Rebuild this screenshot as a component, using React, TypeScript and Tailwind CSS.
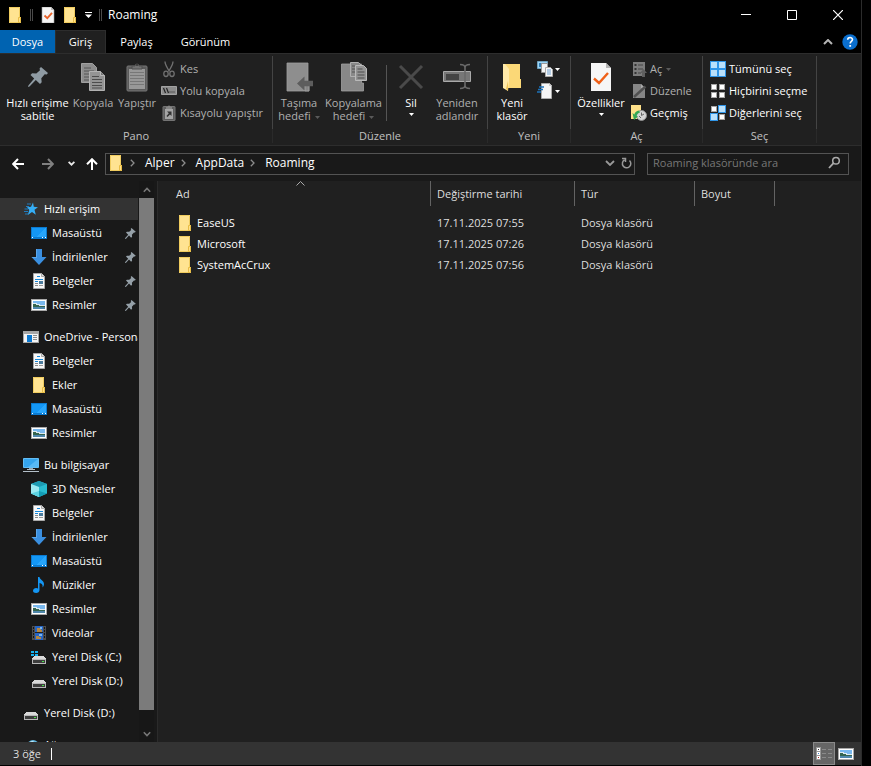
import React from "react";

type IconProps = { className?: string };
type IconType = React.FC<IconProps>;

const FolderIcon: IconType = () => (
  <svg width="16" height="16" viewBox="0 0 16 16" className="shrink-0">
    <path d="M2 0h11v10h1v6H2z" fill="#ffe391" />
    <path d="M2.500 .5h10v10h1v5h-11z" fill="none" stroke="#f0cc5f" />
    <path d="M11.500 10.500h2v5h-2z" fill="#ffe18a" stroke="#e8bc45" />
  </svg>
);

const CheckPageIcon: IconType = () => (
  <svg width="16" height="16" viewBox="0 0 16 16">
    <path d="M2 0h9l3 3v13H2z" fill="#f5f5f5" stroke="#9b9b9b" strokeWidth=".6" />
    <path d="M11 0v3h3z" fill="#bdbdbd" />
    <path d="M4.500 8.500l2.800 2.700 4.700-5.400" fill="none" stroke="#e8622a" strokeWidth="1.800" />
  </svg>
);

const PinIcon: IconType = () => (
  <svg width="22" height="22" viewBox="0 0 22 22">
    <path d="M14 1l7 6-1.300 1.600-2-.3-3.400 3.900.4 4-1.700 1.700-4.200-3.900L2.500 20.500 1 21l.4-1.600 5.800-6.800L3.500 9l1.600-1.700 4.200.2 3.700-3.200-.5-1.800z" fill="#8f9ba3" />
  </svg>
);

const SmallPinIcon: IconType = () => (
  <svg width="11" height="11" viewBox="0 0 11 11" className="shrink-0">
    <path d="M6.500 0l4.300 3.800-.9.800-1-.1-2 2.200.2 2.100-1 .9L4 7.600.8 11 0 10.800.2 10 3.200 6.800 1 4.600l.9-.9 2.300.1 2-1.700-.5-1.200z" fill="#95a0a8" />
  </svg>
);

const CopyIcon: IconType = () => (
  <svg width="26" height="30" viewBox="0 0 26 30">
    <path d="M1.500 1.500h11l4 4v15h-15z" fill="#8d8d8d" stroke="#a0a0a0" />
    <path d="M4 6h7M4 9h10M4 12h5M4 15h5M4 18h5" stroke="#555" />
    <path d="M9.500 9.500h11l4 4v15h-15z" fill="#949494" stroke="#b2b2b2" />
    <path d="M20.500 9.500v4h4" fill="#777" stroke="#b8b8b8" />
    <path d="M12 14.500h7M12 17.500h10M12 20.500h10M12 23.500h10M12 26h10" stroke="#4c4c4c" />
  </svg>
);

const PasteIcon: IconType = () => (
  <svg width="22" height="30" viewBox="0 0 22 30">
    <rect x="1" y="4" width="20" height="25" rx="1" fill="#5b5b5b" stroke="#777" />
    <path d="M3 7h16v20H3z" fill="#989898" />
    <path d="M4 10.500h14M4 13.500h14M4 16.500h14M4 19.500h14M4 22.500h14" stroke="#777" />
    <path d="M6 7V4h3a2 2 0 014 0h3v3z" fill="#727272" stroke="#505050" />
    <circle cx="11" cy="3" r="1" fill="#333" />
  </svg>
);

const ScissorsIcon: IconType = () => (
  <svg width="16" height="18" viewBox="0 0 16 18" fill="none" stroke="#717171" strokeWidth="1.300">
    <path d="M4 1.500c0 3 1.200 5 4.500 10M12 1.500c0 3-1.200 5-4.500 10" />
    <ellipse cx="5" cy="13.800" rx="2.200" ry="2.700" />
    <ellipse cx="11" cy="13.800" rx="2.200" ry="2.700" />
  </svg>
);

const PathIcon: IconType = () => (
  <svg width="16" height="16" viewBox="0 0 16 16">
    <path d="M.5 3.500h15v8H.5z" fill="#8c8c8c" stroke="#a2a2a2" />
    <path d="M2.500 5l2 5M5.500 5l2 5" stroke="#222" strokeWidth="1.200" />
    <path d="M8.500 9h1M10.500 9h1M12.500 9h1" stroke="#222" />
  </svg>
);

const PasteShortcutIcon: IconType = () => (
  <svg width="16" height="16" viewBox="0 0 16 16">
    <rect x="2" y="1.500" width="12" height="14" rx=".5" fill="#5e5e5e" stroke="#747474" />
    <path d="M4 4h8v10H4z" fill="#a5a5a5" />
    <path d="M5 4V2h1.500a1.500 1.500 0 013 0H11v2z" fill="#858585" />
    <path d="M6 6.500h4.500V11L9 9.500 6.500 12 5.500 11l2.300-2.800z" fill="#333" />
  </svg>
);

const MoveToIcon: IconType = () => (
  <svg width="28" height="30" viewBox="0 0 28 30">
    <path d="M2 1h21v20h1v8H2z" fill="#8e8e8e" stroke="#a0a0a0" strokeWidth=".8" />
    <path d="M20 20h4v9h-4z" fill="#858585" stroke="#b0b0b0" strokeWidth=".6" />
    <path d="M12 21.500l7.500-7v4.200H28v5.600h-8.500v4.200z" fill="#5d5d5d" />
  </svg>
);

const CopyToIcon: IconType = () => (
  <svg width="28" height="32" viewBox="0 0 28 32">
    <path d="M1.500 3h20v19h2v8h-22z" fill="#888" stroke="#a0a0a0" strokeWidth=".8" />
    <path d="M10.500 1.500h8l3 3v11h-11z" fill="#898989" stroke="#b0b0b0" />
    <path d="M12 5h5M12 8h3M12 11h3" stroke="#555" />
    <path d="M15.500 4.500h8l3 3v12h-11z" fill="#949494" stroke="#bababa" />
    <path d="M17.500 8h5M17.500 11h7M17.500 14h7M17.500 17h7" stroke="#4c4c4c" />
  </svg>
);

const DeleteIcon: IconType = () => (
  <svg width="26" height="28" viewBox="0 0 26 28">
    <path d="M2 3l22 22M24 3L2 25" stroke="#4a4a4a" strokeWidth="3" />
  </svg>
);

const RenameIcon: IconType = () => (
  <svg width="30" height="28" viewBox="0 0 30 28" fill="none">
    <path d="M1.500 8.500h27v10h-27z" fill="#777" stroke="#aaa" />
    <path d="M4 11h13v6H4z" fill="#444" />
    <path d="M18 1.500c3 0 5 .5 5 3v18c0 2.500-2 3-5 3M28 1.500c-3 0-5 .5-5 3v18c0 2.500 2 3 5 3" stroke="#6a6a6a" strokeWidth="1.600" />
  </svg>
);

const NewFolderIcon: IconType = () => (
  <svg width="20" height="30" viewBox="0 0 20 30">
    <path d="M1 2h17v15h1v9H1z" fill="#fbd877" />
    <path d="M1 2h2l4 5v12l-1 10-5-3z" fill="#ffe9a8" />
    <path d="M6 19v10l-2-2z" fill="#eec255" />
  </svg>
);

const NewItemIcon: IconType = () => (
  <svg width="16" height="16" viewBox="0 0 16 16">
    <path d="M.5 .5h10v7H.5z" fill="#9ed3f5" stroke="#6fa3bf" />
    <path d="M2 2h4v4H2z" fill="#2f7fb8" />
    <path d="M4.500 2.500h6v9h-6z" fill="#f4f4f4" stroke="#999" />
    <path d="M8.500 6.500h5l2 2v7h-7z" fill="#f7f7f7" stroke="#aaa" />
    <path d="M10 9h4M10 11h4M10 13h4" stroke="#6c9fd0" />
  </svg>
);

const EasyAccessIcon: IconType = () => (
  <svg width="16" height="16" viewBox="0 0 16 16">
    <path d="M4.500 .5h8l2 2v13h-10z" fill="#f5f5f5" stroke="#aaa" />
    <path d="M12 0v3h3" fill="#ccc" />
    <path d="M2 4h5M1 6.500h5M0 9h4" stroke="#1c72b8" strokeWidth="1.400" />
  </svg>
);

const PropertiesIcon: IconType = () => (
  <svg width="22" height="30" viewBox="0 0 22 30">
    <path d="M1 1h15l5 5v23H1z" fill="#f6f6f6" />
    <path d="M16 1v5h5z" fill="#b5b5b5" />
    <path d="M4 16.500l5 4.500 9-10" fill="none" stroke="#ef6018" strokeWidth="2.400" />
  </svg>
);

const OpenIcon: IconType = () => (
  <svg width="16" height="16" viewBox="0 0 16 16">
    <path d="M2 1h12v14H2z" fill="#7c7c7c" />
    <path d="M3.500 3h2v2h-2zM3.500 7h2v2h-2zM3.500 11h2v2h-2z" fill="#333" />
    <path d="M7 4h5M7 8h5M7 12h3" stroke="#444" />
    <path d="M12.500 8l3.500 4h-2v4h-3v-4H9z" fill="#606060" />
  </svg>
);

const EditIcon: IconType = () => (
  <svg width="16" height="16" viewBox="0 0 16 16">
    <path d="M2 1h8l4 4v10H2z" fill="#868686" />
    <path d="M10 1v4h4" fill="#aaa" />
    <path d="M3 14L14.500 3.500" stroke="#505050" strokeWidth="2.400" />
  </svg>
);

const HistoryIcon: IconType = () => (
  <svg width="16" height="16" viewBox="0 0 16 16">
    <path d="M0 0h10v9h1v5H0z" fill="#ffe18a" />
    <circle cx="10.500" cy="10.500" r="5" fill="#d5d5d5" stroke="#909090" />
    <path d="M10.500 7.500v3l2.500-1.500M8 11l2 2" stroke="#666" fill="none" />
    <path d="M1.500 8l1.500 7 4-3.500-1.500-.5c.5-2 1.800-3 3.500-3.500l-1-2C5 6 4 7.500 3.300 9.500z" fill="#35a853" />
  </svg>
);

// the four tiles of the "select" icons, blue when the tile is selected
const Tiles: React.FC<{ on: boolean[] }> = ({ on }) => (
  <svg width="16" height="16" viewBox="0 0 16 16" shapeRendering="crispEdges">
    {on.map((selected, i) => {
      const x = (i % 2) * 8;
      const y = Math.floor(i / 2) * 8;
      return selected ? (
        <g key={i}>
          <rect x={x} y={y} width="8" height="8" fill="#2f95e8" />
          <rect x={x + 1} y={y + 1} width="6" height="6" fill="#b9e0fb" />
        </g>
      ) : (
        <g key={i}>
          <rect x={x + 1} y={y + 1} width="6" height="6" fill="#a5a5a5" />
          <rect x={x + 2} y={y + 2} width="4" height="4" fill="#fff" />
        </g>
      );
    })}
  </svg>
);

const SelectAllIcon: IconType = () => <Tiles on={[true, true, true, true]} />;
const SelectNoneIcon: IconType = () => <Tiles on={[false, false, false, false]} />;
const InvertIcon: IconType = () => <Tiles on={[false, true, true, false]} />;

const StarIcon: IconType = () => (
  <svg width="16" height="16" viewBox="0 0 16 16">
    <path d="M10 1.500l.8 4.300 4.200.4-3.500 2.600 1.300 5-3.800-2.800-4.200 3 1.500-5L4 6.200l4-.4z" fill="#35aef5" />
    <path d="M4 3h4M3 5.500h3M1.500 8H5M1 10.500h4M2 13h3" stroke="#1f7cc0" strokeWidth="1" />
  </svg>
);

const DesktopIcon: IconType = () => (
  <svg width="16" height="16" viewBox="0 0 16 16" shapeRendering="crispEdges">
    <path d="M0 2h16v12H0z" fill="#0a7ad0" />
    <path d="M1 3h14v9H1z" fill="#1497f5" />
    <path d="M15 3v9H5z" fill="#27a5fb" />
    <path d="M1 12h1v1H1zM11 12h1v1h-1zM14 12h1v1h-1z" fill="#fff" />
  </svg>
);

const DownloadIcon: IconType = () => (
  <svg width="16" height="16" viewBox="0 0 16 16">
    <path d="M5 0h6v8h4.500L8 16 .5 8H5z" fill="#3a8fe0" />
    <path d="M5 0h1v9H2L.5 8H5z" fill="#5ba8ec" />
  </svg>
);

const DocumentIcon: IconType = () => (
  <svg width="16" height="16" viewBox="0 0 16 16">
    <path d="M2.500 .5h8l3 3v12h-11z" fill="#f8f8f8" stroke="#a9a9a9" />
    <path d="M10.500 .5v3h3" fill="#ddd" stroke="#a9a9a9" />
    <path d="M6 3.500h3M4 6.500h8M4 8.500h3" stroke="#1687d9" />
    <path d="M4 10.500h3M4 12.500h3" stroke="#888" />
    <path d="M8 8h4v3H8z" fill="#4c7c9d" />
    <path d="M8 12.500h4" stroke="#999" />
  </svg>
);

const PictureIcon: IconType = () => (
  <svg width="16" height="16" viewBox="0 0 16 16" shapeRendering="crispEdges">
    <path d="M0 2h16v12H0z" fill="#a8a8a8" />
    <path d="M1 3h14v10H1z" fill="#fff" />
    <path d="M2 4h12v4H2z" fill="#79b8ee" />
    <path d="M2 6h4v1h3v1h5v2H2z" fill="#dce9f2" />
    <path d="M2 7h3v1h3v1h6v1H2z" fill="#35654f" />
    <path d="M2 10h12v2H2z" fill="#4f87ac" />
  </svg>
);

const OneDriveIcon: IconType = () => (
  <svg width="16" height="16" viewBox="0 0 16 16" shapeRendering="crispEdges">
    <path d="M0 2h16v12H0z" fill="#a5a5a5" />
    <path d="M1 5h14v8H1z" fill="#f4f4f4" />
    <path d="M4 6h5v7H4z" fill="#0b78d0" />
    <path d="M10 6h4v1h-4zM10 8h4v1h-4zM10 10h4v1h-4z" fill="#8b8b8b" />
  </svg>
);

const ComputerIcon: IconType = () => (
  <svg width="16" height="16" viewBox="0 0 16 16">
    <path d="M.5 1.500h15v9H.5z" fill="#35a5ee" stroke="#63bdf5" />
    <path d="M15 2v8H5z" fill="#57b9f7" />
    <path d="M6 11h4v1H6z" fill="#8ea2b0" />
    <path d="M4 12.500h8M0 14.500h16" stroke="#b4c0c9" />
  </svg>
);

const CubeIcon: IconType = () => (
  <svg width="16" height="16" viewBox="0 0 16 16">
    <path d="M8 0l8 3v9.500L8 16 0 12.500V3z" fill="#29bcd0" />
    <path d="M8 0l8 3-8 3-8-3z" fill="#1d9bb3" />
    <path d="M0 3l8 3v10l-8-3.500z" fill="#9ceaf2" />
    <path d="M0 12.500L8 10v6z" fill="#5cd3e2" />
    <path d="M8 10l8 2.500L8 16z" fill="#139db5" />
  </svg>
);

const MusicIcon: IconType = () => (
  <svg width="16" height="16" viewBox="0 0 16 16">
    <path d="M7 0h1.500c.3 3 4.500 3.500 4.500 7 0 1.500-.6 2.500-1.500 3.500.6-2.500-.5-4-3-4.500V13c0 1.700-1.500 3-3.300 3S2 15.200 2 13.800C2 12.300 3.500 11 5.200 11c.7 0 1.300.2 1.800.5z" fill="#1496f3" />
  </svg>
);

const VideoIcon: IconType = () => (
  <svg width="16" height="16" viewBox="0 0 16 16" shapeRendering="crispEdges">
    <path d="M1 1h14v14H1z" fill="#4d4d4d" />
    <path d="M4 1h8v14H4z" fill="#2765c4" />
    <path d="M6 3h4v2h1v2H6zM5 11h3v1h2v2H5z" fill="#b58640" />
    <path d="M9 2h2v2H9zM8 9h3v2H8z" fill="#79b6f0" />
    <path d="M4 7h8v1H4z" fill="#222" />
    <path d="M2 2h1v2H2zM2 5h1v2H2zM2 8h1v2H2zM2 11h1v2H2zM13 2h1v2h-1zM13 5h1v2h-1zM13 8h1v2h-1zM13 11h1v2h-1z" fill="#161616" />
  </svg>
);

const DiskBody = () => (
  <>
    <path d="M3 7h10l2 3H1z" fill="#d9d9d9" />
    <path d="M1 10h14v5H1z" fill="#b8b8b8" />
    <path d="M2 11h12v3H2z" fill="#3d3d3d" />
    <path d="M11 12h2v1h-2z" fill="#4be04b" />
  </>
);

const DiskIcon: IconType = () => (
  <svg width="16" height="16" viewBox="0 0 16 16" shapeRendering="crispEdges">
    <DiskBody />
  </svg>
);

const SystemDiskIcon: IconType = () => (
  <svg width="16" height="16" viewBox="0 0 16 16" shapeRendering="crispEdges">
    <DiskBody />
    <path d="M0 2h3v2H0zM4 2h3v2H4zM0 5h3v2H0zM4 5h3v2H4z" fill="#16b4f2" />
  </svg>
);

const NetworkIcon: IconType = () => (
  <svg width="16" height="16" viewBox="0 0 16 16">
    <circle cx="10" cy="9" r="6" fill="#63b8e0" />
    <path d="M7 5c2-1.500 4-1 4 .5S8 8 6 8z" fill="#c5e9f7" />
  </svg>
);

const Caret: React.FC<{ className?: string }> = ({ className = "text-white" }) => (
  <svg width="5" height="3" viewBox="0 0 5 3" className={"inline-block " + className}>
    <path d="M0 0h5L2.500 3z" fill="currentColor" />
  </svg>
);

const Crumb = () => (
  <svg width="5" height="8" viewBox="0 0 5 8" fill="none" stroke="#8c8c8c" strokeWidth="1.300">
    <path d="M.8 .8L4 4 .8 7.200" />
  </svg>
);

type LargeButtonProps = {
  icon: IconType;
  lines: string[];
  width: string;
  caret?: "inline" | "below";
  disabled?: boolean;
};

const LargeButton: React.FC<LargeButtonProps> = ({ icon: Icon, lines, width, caret, disabled }) => (
  <button
    disabled={disabled}
    className={
      "flex shrink-0 flex-col items-center whitespace-nowrap leading-[13px] " +
      width +
      (disabled ? " text-[#b0b0b0]" : " text-white")
    }
  >
    <span className="mb-[3px] flex h-8 items-center justify-center">
      <Icon />
    </span>
    {lines.map((line, i) => (
      <span key={line}>
        {line}
        {caret === "inline" && i === lines.length - 1 && (
          <Caret className="ml-1 align-middle text-[#5a5a5a]" />
        )}
      </span>
    ))}
    {caret === "below" && <Caret className="mt-1" />}
  </button>
);

type SmallButtonProps = {
  icon: IconType;
  label: string;
  disabled?: boolean;
  caret?: boolean;
};

const SmallButton: React.FC<SmallButtonProps> = ({ icon: Icon, label, disabled, caret }) => (
  <button
    disabled={disabled}
    className={
      "flex h-[22px] items-center gap-[3px] whitespace-nowrap " +
      (disabled ? "text-[#b0b0b0]" : "text-white")
    }
  >
    <Icon />
    {label}
    {caret && <Caret className="ml-px text-[#5a5a5a]" />}
  </button>
);

const RibbonGroup: React.FC<{ title: string; width: string; children: React.ReactNode }> = ({
  title,
  width,
  children,
}) => (
  <section className={"flex shrink-0 flex-col pt-0.5 " + width}>
    <div className="flex h-[73px] border-r border-[#444] pt-[5px]">{children}</div>
    <h2 className="h-[14px] border-r border-[#2a2a2a] text-center leading-[14px] text-[#c0c0c0]">
      {title}
    </h2>
  </section>
);

const Ribbon = () => (
  <div className="flex h-[93px] shrink-0 overflow-hidden border-y border-[#2d2d2d] bg-[#202020]">
    <RibbonGroup title="Pano" width="w-[273px]">
      <LargeButton icon={PinIcon} lines={["Hızlı erişime", "sabitle"]} width="ml-1 w-[67px]" />
      <LargeButton icon={CopyIcon} lines={["Kopyala"]} width="w-11" disabled />
      <LargeButton icon={PasteIcon} lines={["Yapıştır"]} width="w-11" disabled />
      <div className="-mt-[3px] ml-0.5">
        <SmallButton icon={ScissorsIcon} label="Kes" disabled />
        <SmallButton icon={PathIcon} label="Yolu kopyala" disabled />
        <SmallButton icon={PasteShortcutIcon} label="Kısayolu yapıştır" disabled />
      </div>
    </RibbonGroup>
    <RibbonGroup title="Düzenle" width="w-[215px]">
      <LargeButton icon={MoveToIcon} lines={["Taşıma", "hedefi"]} width="w-[52px]" caret="inline" disabled />
      <LargeButton icon={CopyToIcon} lines={["Kopyalama", "hedefi"]} width="w-[57px]" caret="inline" disabled />
      <div className="mx-1 mt-1 mb-2 w-px shrink-0 bg-[#555]" />
      <LargeButton icon={DeleteIcon} lines={["Sil"]} width="w-10" caret="below" />
      <LargeButton icon={RenameIcon} lines={["Yeniden", "adlandır"]} width="w-[52px]" disabled />
    </RibbonGroup>
    <RibbonGroup title="Yeni" width="w-[83px]">
      <LargeButton icon={NewFolderIcon} lines={["Yeni", "klasör"]} width="w-12" />
      <div className="-mt-[3px] ml-px">
        <button aria-label="Yeni öğe" className="flex h-[22px] items-center gap-0.5">
          <NewItemIcon />
          <Caret />
        </button>
        <button aria-label="Kolay erişim" className="flex h-[22px] items-center gap-0.5">
          <EasyAccessIcon />
          <Caret />
        </button>
      </div>
    </RibbonGroup>
    <RibbonGroup title="Aç" width="w-[132px]">
      <LargeButton icon={PropertiesIcon} lines={["Özellikler"]} width="w-[60px]" caret="below" />
      <div className="-mt-[3px]">
        <SmallButton icon={OpenIcon} label="Aç" disabled caret />
        <SmallButton icon={EditIcon} label="Düzenle" disabled />
        <SmallButton icon={HistoryIcon} label="Geçmiş" />
      </div>
    </RibbonGroup>
    <RibbonGroup title="Seç" width="w-[114px]">
      <div className="-mt-[3px] pl-[7px]">
        <SmallButton icon={SelectAllIcon} label="Tümünü seç" />
        <SmallButton icon={SelectNoneIcon} label="Hiçbirini seçme" />
        <SmallButton icon={InvertIcon} label="Diğerlerini seç" />
      </div>
    </RibbonGroup>
  </div>
);

const TitleBar = () => (
  <header className="flex h-[30px] shrink-0 items-center pl-[7px]">
    <FolderIcon />
    <span className="mx-[7px] h-3 w-[3px] border-x border-[#4a4a4a]" />
    <button aria-label="Özellikler" className="w-[22px]">
      <CheckPageIcon />
    </button>
    <button aria-label="Yeni klasör">
      <FolderIcon />
    </button>
    <button aria-label="Hızlı erişim araç çubuğu" className="ml-[7px]">
      <svg width="7" height="6" viewBox="0 0 7 6">
        <path d="M0 0h7v1H0zM0 2.500h7L3.500 6z" fill="#fff" />
      </svg>
    </button>
    <span className="mr-1.5 ml-[7px] h-3 w-[3px] border-x border-[#4a4a4a]" />
    <h1 className="flex-1 text-[12px] text-white">Roaming</h1>
    <button aria-label="Simge durumuna küçült" className="flex h-full w-[46px] items-center justify-center">
      <svg width="10" height="10" viewBox="0 0 10 10">
        <path d="M0 4.500h10" stroke="#fff" />
      </svg>
    </button>
    <button aria-label="Ekranı kapla" className="flex h-full w-[46px] items-center justify-center">
      <svg width="10" height="10" viewBox="0 0 10 10">
        <path d="M.5 .5h9v9h-9z" stroke="#fff" fill="none" />
      </svg>
    </button>
    <button aria-label="Kapat" className="flex h-full w-[46px] items-center justify-center">
      <svg width="10" height="10" viewBox="0 0 10 10">
        <path d="M0 0l10 10M10 0L0 10" stroke="#fff" strokeWidth="1.200" />
      </svg>
    </button>
  </header>
);

const TabBar = () => (
  <nav className="flex h-[23px] shrink-0 items-stretch text-white">
    <button className="w-[55px] bg-[#0063b1]">Dosya</button>
    <button className="-mb-px w-[51px] border border-b-0 border-[#2d2d2d] bg-[#202020] pb-0.5">
      Giriş
    </button>
    <button className="w-[61px]">Paylaş</button>
    <button className="w-[77px]">Görünüm</button>
    <span className="flex-1" />
    <button aria-label="Şeridi küçült" className="mr-[9px]">
      <svg width="10" height="6" viewBox="0 0 10 6">
        <path d="M1 5l4-4 4 4" stroke="#b5b5b5" strokeWidth="2" fill="none" />
      </svg>
    </button>
    <button aria-label="Yardım" className="mr-[3px]">
      <svg width="16" height="16" viewBox="0 0 16 16">
        <circle cx="8" cy="8" r="7.700" fill="#0a6fcf" />
        <path d="M5.700 5.800c0-3 4.800-3 4.800-.2 0 1.800-2.300 1.900-2.300 4" stroke="#fff" strokeWidth="1.600" fill="none" />
        <path d="M7.300 11h1.800v1.800H7.300z" fill="#fff" />
      </svg>
    </button>
  </nav>
);

const path = ["Alper", "AppData", "Roaming"];

const AddressBar = () => (
  <div className="flex h-[35px] shrink-0 items-center bg-[#191919] pr-3 pl-3">
    <button aria-label="Geri" className="mr-[18px]">
      <svg width="12" height="12" viewBox="0 0 12 12" fill="none" stroke="#fff" strokeWidth="2">
        <path d="M12 6H1.500M6 1L1.200 6 6 11" />
      </svg>
    </button>
    <button aria-label="İleri" disabled className="mr-[14px]">
      <svg width="12" height="12" viewBox="0 0 12 12" fill="none" stroke="#808080" strokeWidth="2">
        <path d="M0 6h10.500M6 1l4.800 5L6 11" />
      </svg>
    </button>
    <button aria-label="Son konumlar" className="mr-[11px]">
      <svg width="7" height="5" viewBox="0 0 7 5" fill="none" stroke="#e8e8e8" strokeWidth="1.800">
        <path d="M.6 .8l2.900 2.900L6.400 .8" />
      </svg>
    </button>
    <button aria-label="Yukarı" className="mr-[7px]">
      <svg width="12" height="12" viewBox="0 0 12 12" fill="none" stroke="#fff" strokeWidth="2">
        <path d="M6 12V1.500M1 6.200L6 1.200l5 5" />
      </svg>
    </button>
    <div className="flex h-[22px] flex-1 items-center border border-[#535353] pb-0.5 pl-0.5 text-[12px] text-white">
      <FolderIcon />
      {path.map((part) => (
        <React.Fragment key={part}>
          <span className="mr-2.5 ml-1.5">
            <Crumb />
          </span>
          <button>{part}</button>
        </React.Fragment>
      ))}
      <span className="flex-1" />
      <button aria-label="Önceki konumlar" className="mr-1.5">
        <svg width="10" height="6" viewBox="0 0 10 6" fill="none" stroke="#999" strokeWidth="1.800">
          <path d="M1 1l4 4 4-4" />
        </svg>
      </button>
      <button aria-label="Yenile" className="mr-0.5">
        <svg width="11" height="12" viewBox="0 0 11 12" fill="none" stroke="#999" strokeWidth="1.500">
          <path d="M8.500 3.500a4.200 4.200 0 11-5-.6M1 1.500h3.500V5" />
        </svg>
      </button>
    </div>
    <label className="ml-3 flex h-[22px] w-[202px] items-center border border-[#535353] px-[5px] pb-0.5">
      <input
        aria-label="Roaming klasöründe ara"
        placeholder="Roaming klasöründe ara"
        className="min-w-0 flex-1 bg-transparent text-white outline-none placeholder:text-[#777]"
      />
      <svg width="13" height="13" viewBox="0 0 13 13" fill="none" stroke="#ababab" className="mr-0.5">
        <circle cx="8" cy="4.700" r="3.300" strokeWidth="1.500" />
        <path d="M5.500 7.200L1 12" strokeWidth="1.800" />
      </svg>
    </label>
  </div>
);

type TreeItem = { label: string; icon: IconType; pinned?: boolean };
type TreeSection = TreeItem & { items: TreeItem[] };

const tree: TreeSection[] = [
  {
    label: "Hızlı erişim",
    icon: StarIcon,
    items: [
      { label: "Masaüstü", icon: DesktopIcon, pinned: true },
      { label: "İndirilenler", icon: DownloadIcon, pinned: true },
      { label: "Belgeler", icon: DocumentIcon, pinned: true },
      { label: "Resimler", icon: PictureIcon, pinned: true },
    ],
  },
  {
    label: "OneDrive - Personal",
    icon: OneDriveIcon,
    items: [
      { label: "Belgeler", icon: DocumentIcon },
      { label: "Ekler", icon: FolderIcon },
      { label: "Masaüstü", icon: DesktopIcon },
      { label: "Resimler", icon: PictureIcon },
    ],
  },
  {
    label: "Bu bilgisayar",
    icon: ComputerIcon,
    items: [
      { label: "3D Nesneler", icon: CubeIcon },
      { label: "Belgeler", icon: DocumentIcon },
      { label: "İndirilenler", icon: DownloadIcon },
      { label: "Masaüstü", icon: DesktopIcon },
      { label: "Müzikler", icon: MusicIcon },
      { label: "Resimler", icon: PictureIcon },
      { label: "Videolar", icon: VideoIcon },
      { label: "Yerel Disk (C:)", icon: SystemDiskIcon },
      { label: "Yerel Disk (D:)", icon: DiskIcon },
    ],
  },
  { label: "Yerel Disk (D:)", icon: DiskIcon, items: [] },
  { label: "Ağ", icon: NetworkIcon, items: [] },
];

const TreeLink: React.FC<{ item: TreeItem; child?: boolean; selected?: boolean }> = ({
  item,
  child,
  selected,
}) => {
  const Icon = item.icon;
  return (
    <a
      href="#"
      className={
        "flex h-[22px] items-center gap-[5px] pr-0.5 whitespace-nowrap " +
        (child ? "pl-[31px] " : "pl-[23px] ") +
        (selected ? "bg-[#333]" : "")
      }
    >
      <span className="shrink-0">
        <Icon />
      </span>
      <span className="flex-1">{item.label}</span>
      {item.pinned && <SmallPinIcon />}
    </a>
  );
};

const Sidebar = () => (
  <aside className="flex w-[157px] shrink-0 bg-[#191919] text-white">
    <div className="flex w-[138px] flex-col gap-2.5 overflow-hidden pt-[17px]">
      {tree.map((section, i) => (
        <div key={i} className="flex shrink-0 flex-col gap-0.5">
          <TreeLink item={section} selected={i === 0} />
          {section.items.map((item) => (
            <TreeLink key={item.label} item={item} child />
          ))}
        </div>
      ))}
    </div>
    <div className="ml-px flex w-[15px] flex-col items-center bg-[#171717]">
      <span className="flex h-[17px] items-center">
        <svg width="8" height="6" viewBox="0 0 8 6" fill="none" stroke="#777" strokeWidth="1.600">
          <path d="M.8 4.800L4 1.500l3.200 3.300" />
        </svg>
      </span>
      <span className="w-full flex-1 bg-[#7b7b7b]" />
      <span className="mt-[15px] flex h-[17px] items-center">
        <svg width="8" height="6" viewBox="0 0 8 6" fill="none" stroke="#777" strokeWidth="1.600">
          <path d="M.8 1.200L4 4.500l3.200-3.300" />
        </svg>
      </span>
    </div>
  </aside>
);

const files = [
  { name: "EaseUS", date: "17.11.2025 07:55", type: "Dosya klasörü" },
  { name: "Microsoft", date: "17.11.2025 07:26", type: "Dosya klasörü" },
  { name: "SystemAcCrux", date: "17.11.2025 07:56", type: "Dosya klasörü" },
];

const columns = [
  { label: "Ad", width: "w-[273px] pl-[18px]" },
  { label: "Değiştirme tarihi", width: "w-[144px] pl-1.5" },
  { label: "Tür", width: "w-[120px] pl-1.5" },
  { label: "Boyut", width: "w-20 pl-1.5" },
];

const FileList = () => (
  <main className="min-w-0 flex-1 overflow-hidden border-l border-[#2b2b2b] bg-[#202020]">
    <table className="table-fixed text-left">
      <thead>
        <tr className="h-[31px] align-top text-[#dedede]">
          {columns.map((col, i) => (
            <th key={col.label} className="p-0 font-normal">
              <div className={"relative h-[25px] border-r border-[#636363] leading-[25px] " + col.width}>
                {col.label}
                {i === 0 && (
                  <svg width="9" height="5" viewBox="0 0 9 5" fill="none" stroke="#aaa" className="absolute top-0 left-[138px]">
                    <path d="M.5 4.500l4-4 4 4" />
                  </svg>
                )}
              </div>
            </th>
          ))}
        </tr>
      </thead>
      <tbody>
        {files.map((file) => (
          <tr key={file.name} className="h-[21px] text-[#dedede]">
            <td className="p-0">
              <span className="flex items-center gap-1 pl-[19px] text-white">
                <FolderIcon />
                {file.name}
              </span>
            </td>
            <td className="py-0 pr-0 pl-1.5">{file.date}</td>
            <td className="py-0 pr-0 pl-1.5">{file.type}</td>
            <td />
          </tr>
        ))}
      </tbody>
    </table>
  </main>
);

const StatusBar = () => (
  <footer className="flex h-[23px] shrink-0 items-center bg-[#333] pl-[13px] text-[#dedede]">
    <span>3 öğe</span>
    <span className="ml-2.5 h-3 w-px bg-white" />
    <span className="flex-1" />
    <button aria-label="Ayrıntılar" className="flex h-[23px] w-[22px] items-center justify-center border border-[#8a8a8a] bg-[#666]">
      <svg width="16" height="13" viewBox="0 0 16 13" shapeRendering="crispEdges">
        <path d="M0 0h5v13H0z" fill="#999" />
        <path d="M1 1h3v3H1zM1 5h3v3H1zM1 9h3v3H1z" fill="#fff" />
        <path d="M2 2h1v1H2z" fill="#333" />
        <path d="M2 6h1v1H2z" fill="#3b7ed0" />
        <path d="M2 10h1v1H2z" fill="#b02020" />
        <path d="M6 2h4v1H6zM12 2h4v1h-4zM6 6h4v1H6zM12 6h4v1h-4zM6 10h4v1H6zM12 10h4v1h-4z" fill="#8a8a8a" />
      </svg>
    </button>
    <button aria-label="Büyük simgeler" className="mr-[7px] ml-[3px]">
      <PictureIcon />
    </button>
  </footer>
);

const App = () => (
  <div className="h-screen bg-black pr-[9px] font-['Open_Sans','Noto_Sans',sans-serif] text-[11px] leading-4">
    <div className="flex h-full flex-col border-r border-[#2b2b2b]">
      <TitleBar />
      <TabBar />
      <Ribbon />
      <AddressBar />
      <div className="flex min-h-0 flex-1">
        <Sidebar />
        <FileList />
      </div>
      <StatusBar />
      <div className="h-px shrink-0" />
    </div>
  </div>
);

export default App;
